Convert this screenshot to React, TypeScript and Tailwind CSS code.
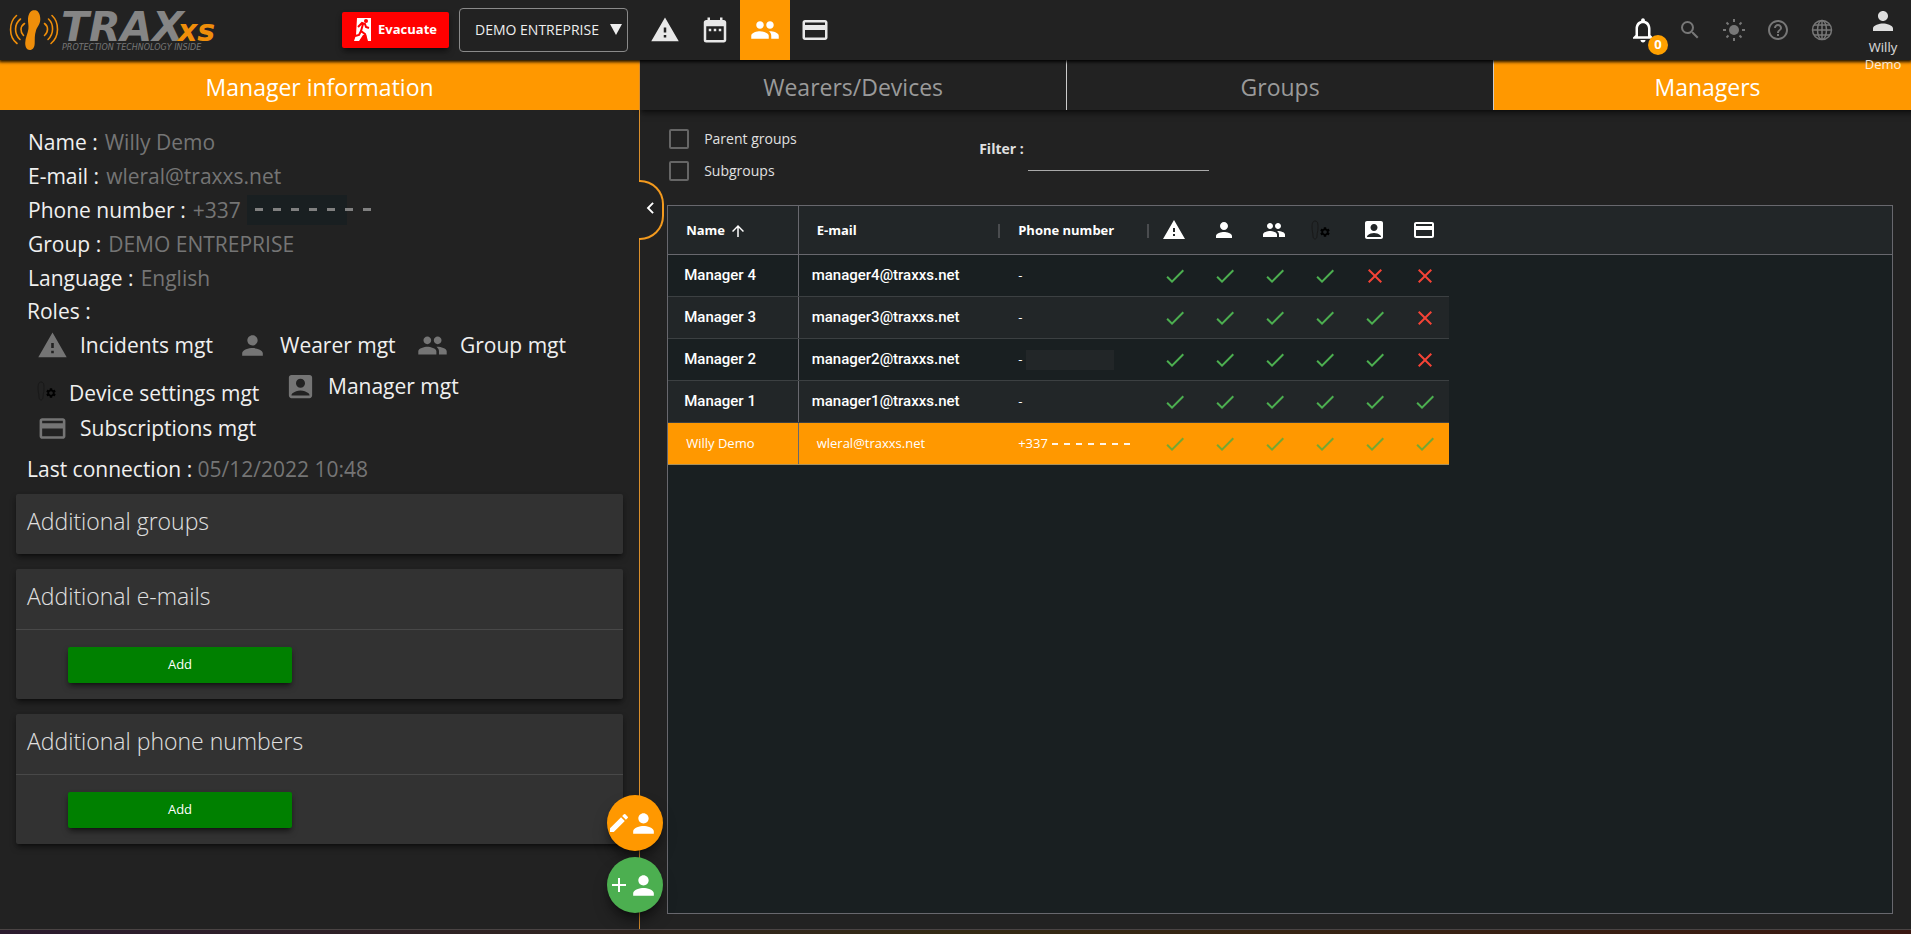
import { useState, type ReactNode } from 'react';
import {
  MdAccountBox,
  MdAdd,
  MdArrowUpward,
  MdCheck,
  MdChevronLeft,
  MdClose,
  MdCreditCard,
  MdDateRange,
  MdEdit,
  MdHelpOutline,
  MdNotificationsNone,
  MdPeople,
  MdPerson,
  MdSearch,
  MdSettings,
  MdWarning,
} from 'react-icons/md';

function Logo() {
  return (
    <svg viewBox="0 0 220 60" className="h-15 w-[220px]" role="img" aria-label="TRAXxs Protection Technology Inside">
      <path
        d="M34.5 10c-4 0-6 4-6.500 8.500-.3 4 .9 6.500.4 10.500-.5 4.500-3.200 8.500-3.200 14 0 4 1.500 7 4.500 7 3.200 0 4.800-2.600 5-6.500.2-4.500-.3-8 1.300-13 1.300-4 4.300-6 4.300-11.500 0-5-2.300-9-5.800-9z"
        fill="#ef8e0a"
      />
      <g fill="none" stroke="#ef8e0a" strokeWidth="1.600" strokeLinecap="round">
        <path d="M24.500 23.500c-4.500 3-4.500 8.500-1 12M20.500 19c-6.500 5-6.500 15-.5 20.500M16.500 15.500c-8 7-8 21.500.5 28" />
        <path d="M44.500 23.500c4 3 4 8.500 0 12M48.500 19c5.500 5 5.500 15-.5 20.500M52 15.500c7.500 7 7.500 21-1 28" />
      </g>
      <g fontFamily="'DejaVu Sans', sans-serif" fontStyle="italic">
        <text x="61" y="41" fill="#858585" fontSize="41" fontWeight="700">TRAX</text>
        <text x="178" y="41" fill="#ef8e0a" fontSize="30" fontWeight="700">xs</text>
        <text x="62" y="50" fill="#777777" fontSize="8">PROTECTION TECHNOLOGY INSIDE</text>
      </g>
    </svg>
  );
}

function ExitIcon() {
  return (
    <svg viewBox="0 0 18 24" className="h-6 w-[18px]">
      <path d="M3 0h14v23h-3l-2-7-3 1-4 6H0l2-6z" fill="white" />
      <circle cx="12" cy="3" r="2" fill="red" />
      <path d="M4 9l4-4 3 1 1 3 3 1M9 6l-2 7 4 3 1 6M7 13l-2 4-4 1" fill="none" stroke="red" strokeWidth="2" />
    </svg>
  );
}

function DeviceSettingsIcon() {
  return (
    <span className="inline-flex w-5 items-center">
      <svg viewBox="0 0 8 20" className="h-5 w-2">
        <path d="M4 1c3 0 3 3 3 7s-1 4-1 8c0 4-4 4-4 0 0-3-1-5-1-9s1-6 3-6z" fill="none" stroke="#181818" />
      </svg>
      <MdSettings size={12} className="mt-1 text-black" />
    </span>
  );
}

function SunIcon() {
  return (
    <svg viewBox="0 0 24 24" className="h-6 w-6" stroke="currentColor" strokeWidth="2">
      <circle cx="12" cy="12" r="5" fill="currentColor" stroke="none" />
      <path d="M12 1v3M12 20v3M1 12h3M20 12h3M4.500 4.500l2 2M17.500 17.500l2 2M4.500 19.500l2-2M17.500 6.500l2-2" />
    </svg>
  );
}

function GlobeIcon() {
  return (
    <svg viewBox="0 0 24 24" className="h-6 w-6" fill="none" stroke="currentColor" strokeWidth="1.500">
      <circle cx="12" cy="12" r="9.500" />
      <ellipse cx="12" cy="12" rx="4.500" ry="9.500" />
      <path d="M12 2.500v19M2.500 12h19M4 7h16M4 17h16" />
    </svg>
  );
}

const details = [
  { label: 'Name', value: 'Willy Demo' },
  { label: 'E-mail', value: 'wleral@traxxs.net' },
  { label: 'Phone number', value: '+337', masked: true },
  { label: 'Group', value: 'DEMO ENTREPRISE' },
  { label: 'Language', value: 'English' },
];

const managers = [
  { name: 'Manager 4', email: 'manager4@traxxs.net', phone: '-', roles: [true, true, true, true, false, false] },
  { name: 'Manager 3', email: 'manager3@traxxs.net', phone: '-', roles: [true, true, true, true, true, false] },
  { name: 'Manager 2', email: 'manager2@traxxs.net', phone: '-', roles: [true, true, true, true, true, false] },
  { name: 'Manager 1', email: 'manager1@traxxs.net', phone: '-', roles: [true, true, true, true, true, true] },
  { name: 'Willy Demo', email: 'wleral@traxxs.net', phone: '+337', roles: [true, true, true, true, true, true] },
];

const roleColumns = [
  { label: 'Incidents', icon: <MdWarning size={24} /> },
  { label: 'Wearers', icon: <MdPerson size={24} /> },
  { label: 'Groups', icon: <MdPeople size={24} /> },
  { label: 'Device settings', icon: <DeviceSettingsIcon /> },
  { label: 'Managers', icon: <MdAccountBox size={24} /> },
  { label: 'Subscriptions', icon: <MdCreditCard size={24} /> },
];

function Header() {
  return (
    <header className="relative z-20 flex h-[60px] shrink-0 items-center bg-[#222222] shadow-[0_1px_3px_1px_rgba(0,0,0,0.9)]">
      <div className="flex w-[342px] shrink-0 items-center">
        <Logo />
      </div>
      <button className="flex h-9 w-[107px] items-center justify-center gap-[6px] rounded-xs bg-[#ff0000] text-[13px] font-bold text-white shadow-md shadow-black/50">
        <ExitIcon />
        Evacuate
      </button>
      <div className="relative ml-[10px]">
        <select aria-label="Group" className="h-11 w-[169px] appearance-none rounded-sm border border-[#8a8a8a] bg-transparent pl-[15px] text-sm text-[#eeeeee]">
          <option>DEMO ENTREPRISE</option>
        </select>
        <svg viewBox="0 0 12 11" className="pointer-events-none absolute top-4 right-[6px] h-[11px] w-3">
          <path d="M0 0h12L6 11z" fill="#eeeeee" />
        </svg>
      </div>
      <nav className="ml-3 flex h-full text-[#e8e8e8]">
        <a href="#incidents" aria-label="Incidents" className="flex w-[50px] items-center justify-center"><MdWarning size={30} /></a>
        <a href="#calendar" aria-label="Calendar" className="flex w-[50px] items-center justify-center"><MdDateRange size={30} /></a>
        <a href="#people" aria-label="People" className="flex w-[50px] items-center justify-center bg-[#ff9800] text-white"><MdPeople size={30} /></a>
        <a href="#subscriptions" aria-label="Subscriptions" className="flex w-[50px] items-center justify-center"><MdCreditCard size={30} /></a>
      </nav>
      <div className="ml-auto flex h-full items-center text-[#777777]">
        <button aria-label="Notifications" className="relative mr-5 text-white">
          <MdNotificationsNone size={30} />
          <span className="absolute top-5 left-5 flex h-5 w-5 items-center justify-center rounded-full bg-[#ffa000] text-[13px] font-bold">0</span>
        </button>
        <div className="mr-[21px] flex items-center gap-5">
          <button aria-label="Search"><MdSearch size={24} /></button>
          <button aria-label="Theme"><SunIcon /></button>
          <button aria-label="Help"><MdHelpOutline size={24} /></button>
          <button aria-label="Language"><GlobeIcon /></button>
        </div>
        <button className="flex w-14 flex-col items-center self-start pt-[6px] text-[13px] leading-[17px] text-white/85">
          <MdPerson size={30} className="mb-[3px]" />
          Willy
          <br />
          Demo
        </button>
      </div>
    </header>
  );
}

function Role({ icon, label, className = '' }: { icon: ReactNode; label: string; className?: string }) {
  return (
    <li className={`flex items-center gap-3 ${className}`}>
      <span className="text-[#757575]">{icon}</span>
      {label}
    </li>
  );
}

function ContactCard({ title, canAdd = false }: { title: string; canAdd?: boolean }) {
  return (
    <section className="mb-[15px] rounded-xs bg-[#323232] shadow-md shadow-black/50">
      <h2 className="flex h-[60px] items-center pb-[6px] pl-[11px] text-[23px] font-light text-[#e0e0e0]">{title}</h2>
      {canAdd && (
        <div className="h-[70px] border-t border-[#484848] pt-[17px] pl-[52px]">
          <button className="h-9 w-56 rounded-xs bg-[#008000] text-[13px] text-white shadow-md shadow-black/50">Add</button>
        </div>
      )}
    </section>
  );
}

function ManagerPanel() {
  return (
    <aside className="relative flex w-[33.5%] shrink-0 flex-col border-r border-[#d98e2b]">
      <h1 className="flex h-[50px] items-center justify-center bg-[#ff9800] pt-1 text-[23px] text-white">Manager information</h1>
      <div className="pt-[15px] text-[21px] leading-[34px] text-[#f0f0f0]">
        <dl className="pl-7">
          {details.map((d) => (
            <div key={d.label} className="flex gap-[7px]">
              <dt>{d.label} :</dt>
              <dd className="flex items-center text-[#757575]">
                {d.value}
                {d.masked && (
                  <span className="relative ml-[6px] h-[30px] w-25 bg-[#191f21]">
                    <span className="absolute top-[13px] left-2 flex gap-[10px]">
                      {[...Array(7)].map((_, i) => (
                        <span key={i} className="h-[3px] w-2 bg-[#808080]" />
                      ))}
                    </span>
                  </span>
                )}
              </dd>
            </div>
          ))}
        </dl>
        <h2 className="pl-[27px] leading-[33px]">Roles :</h2>
        <ul className="flex pl-[37px]">
          <Role icon={<MdWarning size={31} />} label="Incidents mgt" className="w-[200px]" />
          <Role icon={<MdPerson size={31} />} label="Wearer mgt" className="w-[180px]" />
          <Role icon={<MdPeople size={31} />} label="Group mgt" />
        </ul>
        <ul className="flex items-start pt-[7px] pl-[37px]">
          <Role icon={<DeviceSettingsIcon />} label="Device settings mgt" className="w-[248px] pt-[7px]" />
          <Role icon={<MdAccountBox size={31} />} label="Manager mgt" />
        </ul>
        <ul className="pt-px pl-[37px]">
          <Role icon={<MdCreditCard size={31} />} label="Subscriptions mgt" />
        </ul>
        <p className="pt-[7px] pl-[27px]">
          Last connection : <span className="text-[#757575]">05/12/2022 10:48</span>
        </p>
      </div>
      <div className="px-4 pt-2">
        <ContactCard title="Additional groups" />
        <ContactCard title="Additional e-mails" canAdd />
        <ContactCard title="Additional phone numbers" canAdd />
      </div>
      <button aria-label="Collapse panel" className="absolute top-[120px] -right-[25px] flex h-15 w-[25px] items-center justify-center rounded-r-3xl border-2 border-l-0 border-[#f39a1e] bg-[#222222] pb-1 text-white">
        <MdChevronLeft size={24} />
      </button>
      <div className="absolute -right-6 bottom-4 z-10 grid gap-[6px] text-white">
        <button aria-label="Edit manager" className="flex h-14 w-14 items-center rounded-full bg-[#ff9800] shadow-lg shadow-black/50">
          <MdEdit size={24} />
          <MdPerson size={31} className="-ml-[3px]" />
        </button>
        <button aria-label="Add manager" className="flex h-14 w-14 items-center rounded-full bg-[#4caf50] shadow-lg shadow-black/50">
          <MdAdd size={24} />
          <MdPerson size={31} className="-ml-[3px]" />
        </button>
      </div>
    </aside>
  );
}

function ManagersTable() {
  return (
    <div className="mr-[18px] mb-[15px] ml-[27px] flex-1 border border-[#68686e] bg-[#191f21] text-white">
      <table className="w-full table-fixed border-collapse text-[13px]">
        <colgroup>
          <col className="w-[130px]" />
          <col className="w-[202px]" />
          <col className="w-[149px]" />
          {roleColumns.map((c) => (
            <col key={c.label} className="w-[50px]" />
          ))}
          <col />
        </colgroup>
        <thead>
          <tr className="h-12 border-b border-[#68686e] bg-[#222628] text-left">
            <th className="border-r border-[#68686e] pt-[2px] pl-[18px]">
              <span className="flex items-center gap-1">
                Name <MdArrowUpward size={18} />
              </span>
            </th>
            <th className="pt-[2px] pl-[18px]">
              <span className="flex h-[14px] items-center border-r-2 border-[#4a4c4f]">E-mail</span>
            </th>
            <th className="pt-[2px] pl-[18px]">
              <span className="flex h-[14px] items-center border-r-2 border-[#4a4c4f]">Phone number</span>
            </th>
            {roleColumns.map((c) => (
              <th key={c.label} aria-label={c.label}>
                <span className={`flex h-6 items-center justify-center ${c.label === 'Device settings' ? 'pr-[6px]' : ''}`}>{c.icon}</span>
              </th>
            ))}
            <th />
          </tr>
        </thead>
        <tbody>
          {managers.map((m, i) => {
            const selected = m.name === 'Willy Demo';
            const line = selected ? 'border-b border-[#a8905c]' : 'border-b border-[#3c4042]';
            const bg = selected ? 'bg-[#ff9800]' : i % 2 ? 'bg-[#222628]' : 'bg-[#191f21]';
            const font = selected ? 'pt-[2px]' : "font-['Roboto'] text-[15px] font-medium";
            return (
              <tr key={m.name} className="h-[42px]">
                <td className={`${line} ${bg} ${font} border-r border-r-[#68686e] ${selected ? 'pl-[18px]' : 'pl-4'}`}>{m.name}</td>
                <td className={`${line} ${bg} ${font} ${selected ? 'pl-[18px]' : 'pl-[13px]'}`}>{m.email}</td>
                <td className={`${line} ${bg} pt-[2px] pl-[18px]`}>
                  <span className="flex items-center">
                    {m.phone}
                    {selected && (
                      <span className="ml-1 flex gap-[6px]">
                        {[...Array(7)].map((_, n) => (
                          <span key={n} className="h-[2px] w-[6px] bg-white/90" />
                        ))}
                      </span>
                    )}
                    {m.name === 'Manager 2' && <span className="ml-1 h-5 w-[88px] bg-[#222628]" />}
                  </span>
                </td>
                {m.roles.map((ok, n) => (
                  <td key={n} className={`${line} ${bg} pt-[2px]`}>
                    <span className="flex justify-center pl-[2px]">
                      {ok ? (
                        <MdCheck size={24} className={selected ? 'text-[#74a833]' : 'text-[#4caf50]'} />
                      ) : (
                        <MdClose size={24} className="text-[#f44336]" />
                      )}
                    </span>
                  </td>
                ))}
                <td />
              </tr>
            );
          })}
        </tbody>
      </table>
    </div>
  );
}

function GroupFilters() {
  const [parents, setParents] = useState(false);
  const [subgroups, setSubgroups] = useState(false);
  const box = 'h-5 w-5 appearance-none rounded-xs border-2 border-[#666666] checked:bg-[#ff9800]';

  return (
    <div className="flex h-[95px] pt-[13px] pl-[29px] text-sm text-[#e0e0e0]">
      <div className="w-[310px]">
        <label className="flex h-8 items-center gap-[15px]">
          <input type="checkbox" checked={parents} onChange={() => setParents(!parents)} className={box} />
          Parent groups
        </label>
        <label className="flex h-8 items-center gap-[15px]">
          <input type="checkbox" checked={subgroups} onChange={() => setSubgroups(!subgroups)} className={box} />
          Subgroups
        </label>
      </div>
      <label className="flex h-[48px] items-end gap-1 font-bold">
        <span className="pb-3">Filter :</span>
        <input type="text" className="h-6 w-[181px] border-b border-[#aaaaaa] bg-transparent font-normal outline-none" />
      </label>
    </div>
  );
}

export default function App() {
  return (
    <div className="flex min-h-screen flex-col overflow-hidden bg-[#222222] font-['Open_Sans',sans-serif]">
      <Header />
      <main className="flex flex-1">
        <ManagerPanel />
        <section className="flex min-w-0 flex-1 flex-col">
          <nav className="-mr-[10px] grid h-[50px] grid-cols-3 text-[23px] text-[#9a9a9a] shadow-md shadow-black/50">
            <a href="#wearers" className="flex items-center justify-center border-r border-[#cccccc] pt-1">Wearers/Devices</a>
            <a href="#groups" className="flex items-center justify-center border-r border-[#cccccc] pt-1">Groups</a>
            <a href="#managers" className="flex items-center justify-center bg-[#ff9800] pt-1 text-white">Managers</a>
          </nav>
          <GroupFilters />
          <ManagersTable />
        </section>
      </main>
      <footer className="h-[5px] border-t border-[#4a4444] bg-linear-to-r from-[#2b1a2e] via-[#332a14] to-[#3a1812]" />
    </div>
  );
}
